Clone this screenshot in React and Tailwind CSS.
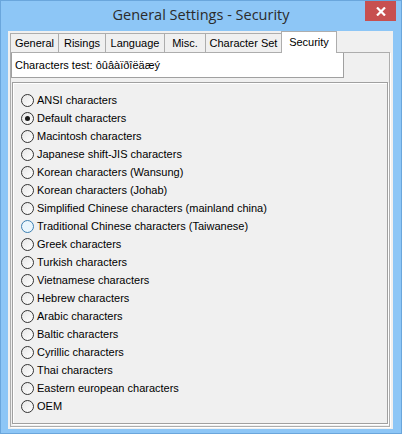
import React from "react";

const options = [
  "ANSI characters",
  "Default characters",
  "Macintosh characters",
  "Japanese shift-JIS characters",
  "Korean characters (Wansung)",
  "Korean characters (Johab)",
  "Simplified Chinese characters (mainland china)",
  "Traditional Chinese characters (Taiwanese)",
  "Greek characters",
  "Turkish characters",
  "Vietnamese characters",
  "Hebrew characters",
  "Arabic characters",
  "Baltic characters",
  "Cyrillic characters",
  "Thai characters",
  "Eastern european characters",
  "OEM",
];

const tabs = [
  { label: "General", w: "w-[49px]" },
  { label: "Risings", w: "w-[48px]" },
  { label: "Language", w: "w-[60px]" },
  { label: "Misc.", w: "w-[42px]" },
  { label: "Character Set", w: "w-[77px]" },
];

const Radio = ({ checked, hover }) => (
  <span
    className={
      "w-[13px] h-[13px] rounded-full border flex items-center justify-center shrink-0 " +
      (hover
        ? "border-[#3c7fb1] bg-[#eaf6fd]"
        : "border-[#333333] bg-gradient-to-br from-[#e6e6e6] to-white")
    }
  >
    {checked && <span className="w-[5px] h-[5px] rounded-full bg-[#1a1a1a]" />}
  </span>
);

const App = () => {
  return (
    <div
      className="w-[402px] h-[434px] bg-[#8dc6f6] border border-[#6aa6dc] flex flex-col relative overflow-hidden"
      style={{ fontFamily: '"Liberation Sans", Arial, sans-serif' }}
    >
      {/* title bar */}
      <div className="h-[30px] flex items-center justify-center">
        <span
          className="text-[14.5px] text-[#2b2b2b] leading-none -mt-[1px]"
          style={{ fontFamily: '"Open Sans", "Noto Sans", sans-serif' }}
        >
          General Settings - Security
        </span>
      </div>
      <div className="absolute top-0 right-[5px] w-[31px] h-[20px] bg-[#c75050] flex items-center justify-center">
        <svg width="10" height="9" viewBox="0 0 10 9">
          <path d="M1 0.5 L9 8.5 M9 0.5 L1 8.5" stroke="white" strokeWidth="2.2" />
        </svg>
      </div>

      {/* client area */}
      <div className="ml-[7px] w-[385px] h-[398px] bg-[#f0f0f0] text-[11px] text-black">
        {/* tab strip */}
        <div className="flex items-end h-[21px] pl-[2px] relative z-10">
          {tabs.map((t) => (
            <div
              key={t.label}
              className={
                t.w +
                " h-[19px] border border-b-0 border-[#adadad] -mr-[1px] bg-[#f0f0f0] flex items-center justify-center"
              }
            >
              {t.label}
            </div>
          ))}
          <div className="w-[56px] h-[22px] -mb-[1px] border border-b-0 border-[#adadad] bg-white flex items-start justify-center pt-[2px]">
            Security
          </div>
        </div>

        {/* tab panel */}
        <div className="ml-[2px] w-[380px] h-[375px] border border-[#adadad] bg-[#f0f0f0] shadow-[1px_1px_0_white]">
          <div className="w-[333px] h-[25px] bg-white border-l border-r border-b border-[#a0a0a0] flex items-center pl-[3px]">
            Characters test: ôûâàïðîëäæý
          </div>

          <div className="mt-[4px] ml-[1px] w-[376px] h-[342px] border border-[#a0a0a0] shadow-[inset_1px_1px_0_white,1px_1px_0_white] pt-[8px] pl-[8px]">
            {options.map((o, i) => (
              <div key={o} className="h-[18px] flex items-center">
                <Radio checked={i === 1} hover={i === 7} />
                <span className="ml-[3px] whitespace-nowrap">{o}</span>
              </div>
            ))}
          </div>
        </div>
      </div>
    </div>
  );
};

export default App;
